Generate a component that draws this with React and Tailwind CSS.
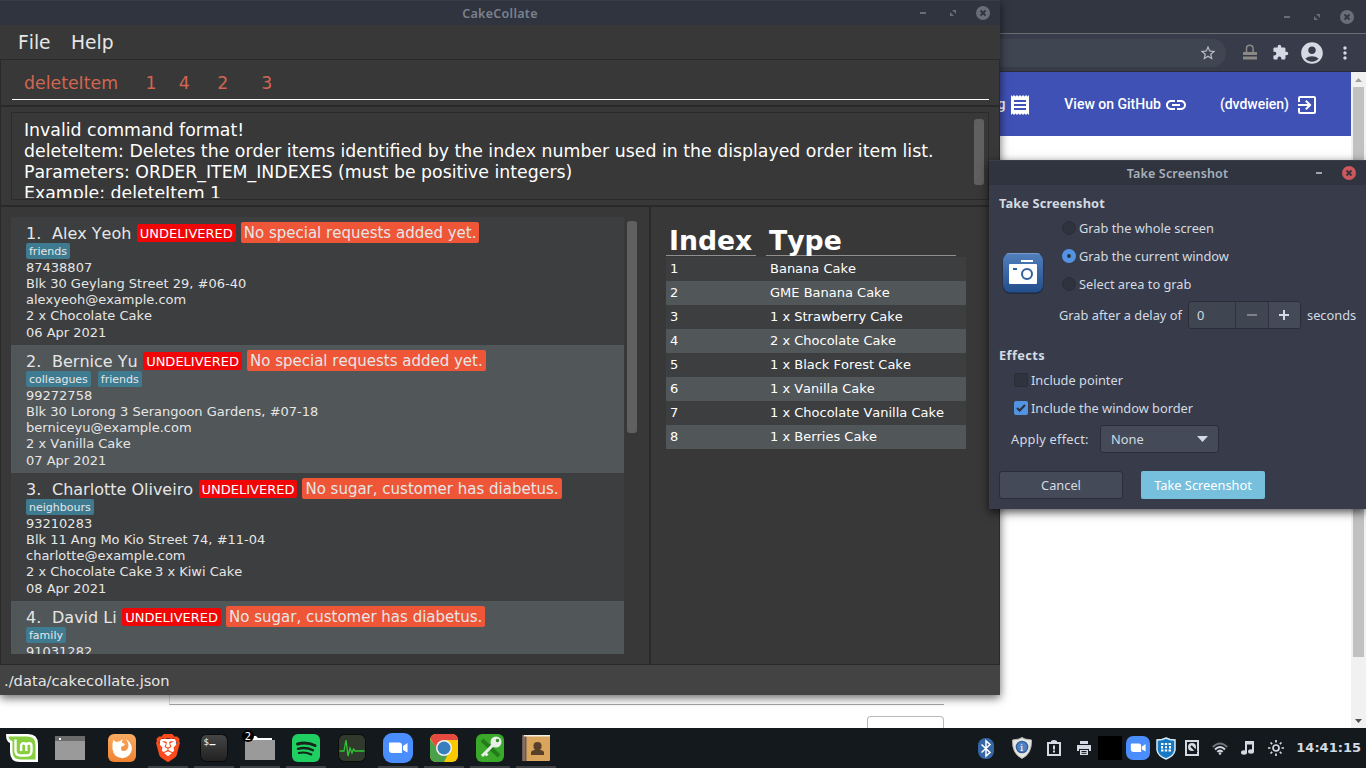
import React from "react";
import { MdReceipt, MdLink, MdExitToApp, MdExtension, MdAccountCircle, MdMoreVert, MdStarBorder } from "react-icons/md";
import { SiBrave } from "react-icons/si";

const orders = [
  { name: "Alex Yeoh", note: "No special requests added yet.", tags: ["friends"], phone: "87438807", address: "Blk 30 Geylang Street 29, #06-40", email: "alexyeoh@example.com", items: ["2 x Chocolate Cake"], date: "06 Apr 2021" },
  { name: "Bernice Yu", note: "No special requests added yet.", tags: ["colleagues", "friends"], phone: "99272758", address: "Blk 30 Lorong 3 Serangoon Gardens, #07-18", email: "berniceyu@example.com", items: ["2 x Vanilla Cake"], date: "07 Apr 2021" },
  { name: "Charlotte Oliveiro", note: "No sugar, customer has diabetus.", tags: ["neighbours"], phone: "93210283", address: "Blk 11 Ang Mo Kio Street 74, #11-04", email: "charlotte@example.com", items: ["2 x Chocolate Cake", "3 x Kiwi Cake"], date: "08 Apr 2021" },
  { name: "David Li", note: "No sugar, customer has diabetus.", tags: ["family"], phone: "91031282", address: "", email: "", items: [], date: "" },
];

const orderItems = ["Banana Cake", "GME Banana Cake", "1 x Strawberry Cake", "2 x Chocolate Cake", "1 x Black Forest Cake", "1 x Vanilla Cake", "1 x Chocolate Vanilla Cake", "1 x Berries Cake"];

function Minimize() {
  return <svg width="6" height="2"><rect width="6" height="2" fill="currentColor" /></svg>;
}

function Maximize() {
  return (
    <svg width="6" height="6" viewBox="0 0 6 6" fill="currentColor">
      <path d="M2 0h4v4zM0 2l4 4H0z" />
    </svg>
  );
}

function Close({ disc, cross }) {
  return (
    <svg width="14" height="14" viewBox="0 0 14 14">
      <circle cx="7" cy="7" r="7" fill={disc} />
      <path d="M4.5 4.5l5 5m0-5l-5 5" stroke={cross} strokeWidth="1.8" />
    </svg>
  );
}

function Browser() {
  return (
    <div className="flex h-[728px] w-full flex-col bg-white">
      <div className="flex h-[33px] shrink-0 items-center justify-end gap-6 bg-[#313641] pr-3 text-[#686d78]">
        <Minimize />
        <Maximize />
        <div className="-ml-1"><Close disc="#686d78" cross="#313641" /></div>
      </div>
      <div className="flex h-[39px] shrink-0 items-center border-b border-t border-b-[#2b2e39] border-t-[#696d75] bg-[#383c4a] pr-[13px]">
        <div className="flex h-7 w-[1226px] items-center justify-end rounded-r-full bg-[#404552] pr-[9px]">
          <MdStarBorder size={18} color="#b8bcc6" />
        </div>
        <div className="flex flex-1 items-center justify-end">
          <svg className="mr-[14px]" width="16" height="17" viewBox="0 0 16 17">
            <path d="M4.5 8V4.5a3.3 3.3 0 0 1 6.600 0V8" fill="none" stroke="#8b8986" strokeWidth="1.5" />
            <rect x="1" y="8" width="14" height="3" fill="#8b8986" />
            <rect x="1" y="12.5" width="14" height="3" fill="#8b8986" />
          </svg>
          <MdExtension size={17} color="#d3dae3" className="mr-[10px]" />
          <MdAccountCircle size={26} color="#d3dae3" className="mr-[10px]" />
          <MdMoreVert size={20} color="#d3dae3" className="-mr-[2px]" />
        </div>
      </div>
      <div className="flex min-h-0 flex-1">
        <div className="flex flex-1 flex-col">
          <div className="flex h-16 items-center justify-end bg-[#3f51b5] pr-8 font-['Roboto',sans-serif] text-[14px] font-medium text-white">
            <span>Catalog</span>
            <MdReceipt size={24} className="ml-[3px] mt-px" />
            <span className="ml-8">View on GitHub</span>
            <MdLink size={24} className="ml-[3px] mt-px" />
            <span className="ml-8">(dvdweien)</span>
            <MdExitToApp size={24} className="ml-[6px] mt-px" />
          </div>
          <div className="flex flex-1 flex-col justify-end pl-[169px]">
            <div className="h-5 w-[775px] border-b border-l border-b-[#a3a3a3] border-l-[#dddddd]" />
            <div className="mt-[11px] flex w-[775px] justify-end">
              <div className="h-3 w-[77px] rounded-t border border-b-0 border-[#b9b9b9]" />
            </div>
          </div>
        </div>
        <div className="flex w-[15px] flex-col items-center bg-[#f1f1f1]">
          <div className="flex h-[15px] items-center"><svg width="7" height="4"><path d="M0 4L3.5 0 7 4z" fill="#a0a0a0" /></svg></div>
          <div className="h-[570px] w-[11px] bg-[#c1c1c1]" />
          <div className="mt-auto flex h-[15px] items-center"><svg width="7" height="4"><path d="M0 0L3.5 4 7 0z" fill="#505050" /></svg></div>
        </div>
      </div>
    </div>
  );
}

function OrderRow({ order, index }) {
  return (
    <div className={`h-32 shrink-0 pl-[15px] pt-[6px] text-[13px] leading-4 text-[#e6e6e6] ${index % 2 ? "bg-[#515658]" : "bg-[#3c3e3f]"}`}>
      <div className="flex h-5 items-start whitespace-pre text-[16px] leading-4">
        <span className="mt-[3px] w-[26px]">{index + 1}.</span>
        <span className="mt-[3px]">{order.name}</span>
        <span className="ml-[5.5px] mt-px h-[18px] rounded-[2px] bg-[#f00606] px-[3px] text-[13px] leading-[20px] text-white">UNDELIVERED</span>
        <span className="-mt-px ml-[5px] h-[21px] rounded-[2px] bg-[#ef5537] px-[3px] text-[15px] leading-[22px]">{order.note}</span>
      </div>
      <div className="flex h-[17px] gap-[7px]">
        {order.tags.map((t) => (
          <span key={t} className="h-4 rounded-[2px] bg-[#3e7b91] px-[3px] text-[11px] leading-[17px]">{t}</span>
        ))}
      </div>
      <div>{order.phone}</div>
      <div>{order.address}</div>
      <div>{order.email}</div>
      <div className="flex h-[17px] gap-[3px]">{order.items.map((i) => <span key={i}>{i}</span>)}</div>
      <div>{order.date}</div>
    </div>
  );
}

function CakeCollate() {
  return (
    <div className="absolute left-0 top-0 flex h-[695px] w-[1000px] flex-col bg-[#383838] font-['DejaVu_Sans',sans-serif] shadow-[0_3px_9px_rgba(0,0,0,0.6)] [font-kerning:none]">
      <div className="grid h-[25px] shrink-0 grid-cols-[1fr_auto_1fr] items-center border-t border-[#383c48] bg-[#2f343f] text-[#7c818c]">
        <span />
        <span className="pt-0.5 font-['Noto_Sans',sans-serif] text-[12.5px] font-semibold tracking-[0.3px]">CakeCollate</span>
        <div className="flex items-center justify-end gap-6 pr-[10px] text-[#686d78]">
          <Minimize />
          <Maximize />
          <div className="-ml-1"><Close disc="#686d78" cross="#2f343f" /></div>
        </div>
      </div>
      <div className="flex h-[34px] shrink-0 items-center gap-[20.5px] pl-[18px] pt-0.5 text-[18.67px] text-[#e6e6e6]">
        <span>File</span>
        <span>Help</span>
      </div>
      <div className="flex h-[606px] shrink-0 flex-col border border-[#292929]">
        <div className="h-[45px] pl-[11px] pr-[10px]">
          <div className="flex h-10 items-center whitespace-pre border-b border-white pl-3 pt-[9px] text-[17.33px] text-[#d06651]">{"deleteItem     1    4     2      3"}</div>
        </div>
        <div className="h-[102px] border-y-2 border-[#292929] px-[10px] py-[5px]">
          <div className="flex h-[88px] justify-between overflow-hidden border border-[#2b2b2b] pl-3 pr-1 pt-[7px]">
            <div className="h-[78px] overflow-hidden whitespace-pre text-[17.33px] leading-[21px] text-white">
              <div>Invalid command format!</div>
              <div>deleteItem: Deletes the order items identified by the index number used in the displayed order item list.</div>
              <div>Parameters: ORDER_ITEM_INDEXES (must be positive integers)</div>
              <div>Example: deleteItem 1</div>
            </div>
            <div className="-mt-px h-[66px] w-[10px] rounded-[3px] bg-[#606060]" />
          </div>
        </div>
        <div className="flex min-h-0 flex-1">
          <div className="flex w-[650px] border-r-2 border-[#2a2a2a] pl-[10px] pt-[10px]">
            <div className="flex h-[437px] w-[613px] flex-col overflow-hidden">
              {orders.map((o, i) => <OrderRow key={o.name} order={o} index={i} />)}
            </div>
            <div className="ml-[3px] mt-1 h-[212px] w-[10px] rounded-[3px] bg-[#606060]" />
          </div>
          <div className="pl-[15px] pt-[17px] text-[13px] text-white">
            <div className="flex h-[33px] gap-[10px] text-[26.67px] font-bold leading-[33px]">
              <div className="h-8 w-[90px] border-b border-[#8f8f8f] pl-[3px]">Index</div>
              <div className="h-8 w-[190px] border-b border-[#8f8f8f] pl-[3px]">Type</div>
            </div>
            {orderItems.map((name, i) => (
              <div key={name} className={`flex h-6 w-[300px] items-center pl-1 ${i % 2 ? "bg-[#515658]" : "bg-[#3c3e3f]"}`}>
                <span className="w-[100px]">{i + 1}</span>
                <span>{name}</span>
              </div>
            ))}
          </div>
        </div>
      </div>
      <div className="flex flex-1 items-center bg-[#434343] pl-1 pt-0.5 text-[14.67px] text-[#e6e6e6]">./data/cakecollate.json</div>
    </div>
  );
}

function Radio({ on, children }) {
  return (
    <div className="flex h-7 items-center gap-[3px]">
      <span className={`flex size-[14px] items-center justify-center rounded-full ${on ? "bg-[#5294e2]" : "border border-[#2b2e39] bg-[#2f333d]"}`}>
        {on && <span className="size-1 rounded-full bg-[#2d3442]" />}
      </span>
      {children}
    </div>
  );
}

function ScreenshotDialog() {
  return (
    <div className="absolute left-[989px] top-[160px] flex h-[349px] w-[377px] flex-col bg-[#383c4a] font-['Noto_Sans',sans-serif] text-[12.8px] leading-4 text-[#d3dae3] shadow-[0_3px_9px_rgba(0,0,0,0.7)]">
      <div className="grid h-[25px] shrink-0 grid-cols-[1fr_auto_1fr] items-center border-t border-[#3b3f4b] bg-[#2f343f]">
        <span />
        <span className="pt-px text-[12.5px] font-semibold tracking-[0.15px] text-[#a9b0bb]">Take Screenshot</span>
        <div className="flex items-center justify-end gap-5 pr-[10px] text-[#a0a5af]">
          <Minimize />
          <Close disc="#cc575d" cross="#2f343f" />
        </div>
      </div>
      <div className="flex flex-1 flex-col pl-[10px] pt-[10px]">
        <div className="h-[19px] text-[12.8px] font-bold tracking-[0.13px]">Take Screenshot</div>
        <div className="flex">
          <div className="w-[63px] pl-[3px] pt-[38px]">
            <svg width="42" height="42" viewBox="0 0 42 42">
              <defs><linearGradient id="cam" x1="0" y1="0" x2="0" y2="1"><stop offset="0" stopColor="#5180bd" /><stop offset="1" stopColor="#234d8b" /></linearGradient></defs>
              <rect x="0.5" y="1" width="41" height="41" rx="8" fill="#202b3c" />
              <rect x="1" y="1" width="40" height="39.5" rx="7.5" fill="url(#cam)" />
              <path d="M4 2.2Q6 1.500 8 1.500H34Q36 1.500 38 2.2" fill="none" stroke="#7fa3d2" strokeWidth="0.8" />
              <rect x="19" y="8" width="12" height="2" fill="#fff" />
              <rect x="7" y="12" width="28" height="20" rx="1" fill="#fff" />
              <rect x="11" y="16" width="4" height="2" fill="#315f9e" />
              <circle cx="25" cy="22" r="5" fill="none" stroke="#315f9e" strokeWidth="2" />
            </svg>
          </div>
          <div>
            <Radio>Grab the whole screen</Radio>
            <Radio on>Grab the current window</Radio>
            <Radio>Select area to grab</Radio>
          </div>
        </div>
        <div className="mt-[3px] flex h-7 items-center">
          <span className="ml-[60px] w-[129px] whitespace-nowrap">Grab after a delay of</span>
          <div className="flex h-7 w-[113px] overflow-hidden rounded-[3px] border border-[#2b2e39] bg-[#404552]">
            <span className="flex w-[47px] items-center border-r border-[#2f333f] pl-2">0</span>
            <span className="flex w-[33px] items-center justify-center border-r border-[#2f333f]"><svg width="10" height="2"><rect width="10" height="2" fill="#7c818c" /></svg></span>
            <span className="flex flex-1 items-center justify-center bg-[#444a58] pr-px"><svg width="10" height="10"><path d="M0 4h10v2H0zM4 0h2v10H4z" fill="#d3dae3" /></svg></span>
          </div>
          <span className="ml-[6px]">seconds</span>
        </div>
        <div className="mt-[18px] h-[19px] text-[12.8px] font-bold tracking-[0.4px]">Effects</div>
        <div className="flex h-7 items-center gap-[3px] pl-[15px]">
          <span className="size-[14px] rounded-[2px] border border-[#2b2e39] bg-[#2f333d]" />
          <span>Include pointer</span>
        </div>
        <div className="flex h-7 items-center gap-[3px] pl-[15px]">
          <span className="flex size-[14px] items-center justify-center rounded-[2px] bg-[#5294e2]">
            <svg width="10" height="8" viewBox="0 0 10 8"><path d="M1 4l2.700 2.500L9 1" fill="none" stroke="#2b303d" strokeWidth="2" /></svg>
          </span>
          <span>Include the window border</span>
        </div>
        <div className="mt-[3px] flex h-7 items-center pl-3">
          <span className="w-[89px] whitespace-nowrap tracking-[0.25px]">Apply effect:</span>
          <div className="flex h-7 w-[119px] items-center justify-between rounded-[3px] border border-[#2b2e39] bg-[#444a58] pl-[10px] pr-[10px]">
            <span>None</span>
            <svg width="11" height="6"><path d="M0 0h11L5.500 6z" fill="#d3dae3" /></svg>
          </div>
        </div>
        <div className="mt-[18px] flex gap-[18px]">
          <div className="flex h-7 w-[124px] items-center justify-center rounded-[3px] border border-[#2b2e39] bg-[#444a58]">Cancel</div>
          <div className="flex h-7 w-[124px] items-center justify-center rounded-[2px] bg-[#76c0de] text-white">Take Screenshot</div>
        </div>
      </div>
    </div>
  );
}

const Cam = ({ size }) => (
  <svg width={size} height={size} viewBox="0 0 30 30">
    <rect width="30" height="30" rx="9" fill="#4a8dfc" />
    <path d="M6 10.500Q6 9.500 7 9.500h9q3 0 3 3v7.500H9q-3 0-3-3zM20 13l4.500-3v9.500L20 17z" fill="#fff" />
  </svg>
);

const MintIcon = () => (
  <svg width="32" height="28" viewBox="0 0 32 28">
    <path d="M0 0h22q10 0 10 10v18H14Q4 28 4 18V9Q0 8 0 0z" fill="#fff" />
    <path d="M2.500 2.500H21q8.500 0 8.500 8v15H15q-8.500 0-8.500-8V7Q3 6.500 2.500 2.500z" fill="#87cf3e" />
    <path d="M9.500 5.500v11q0 5 5 5h6.500q4.500 0 4.500-4.500v-5q0-2.800-2.600-2.800T20.300 12v5M20.300 12q0-2.800-2.600-2.800T15.100 12v5" fill="none" stroke="#fff" strokeWidth="2.400" />
  </svg>
);
const FolderWindow = () => (
  <svg width="30" height="24"><rect width="30" height="24" fill="#9a9a9a" /><rect width="30" height="5" fill="#6b6b6b" /><rect x="4" y="2" width="2" height="2" fill="#fff" /></svg>
);
const FirefoxIcon = () => (
  <svg width="28" height="28" viewBox="0 0 28 28">
    <defs><linearGradient id="ff" x1="0" y1="0" x2="0" y2="1"><stop offset="0" stopColor="#f8ab62" /><stop offset="1" stopColor="#f08230" /></linearGradient></defs>
    <rect width="28" height="28" rx="6" fill="url(#ff)" />
    <path d="M5.500 5.500Q6.500 7.500 8.500 8q2-1 3.500-.8Q13 5.500 15 5.500q-1.500 1.500-1 3.200l3 1.300q-.5 2-3.500 2.500Q12 16 15 17q3 .5 4.500-2Q22 11 18 5q5.500 3.500 6 9.500-1 9-9.500 9.700Q5.500 23.500 4.500 15 4 9 5.500 5.500z" fill="#fff" />
  </svg>
);
const BraveIcon = () => (
  <div className="relative flex h-8 w-7 items-center justify-center">
    <svg className="absolute left-1 top-1" width="20" height="25"><path d="M2 3h16l1 11-9 9-9-9z" fill="#fff" /></svg>
    <SiBrave className="relative" size={32} color="#fb4a1c" />
  </div>
);
const TerminalIcon = () => (
  <svg width="28" height="28">
    <defs><linearGradient id="term" x1="0" y1="0" x2="0" y2="1"><stop offset="0" stopColor="#464646" /><stop offset="1" stopColor="#212121" /></linearGradient></defs>
    <rect x="0.500" y="0.500" width="27" height="27" rx="6" fill="url(#term)" stroke="#0b0b0b" />
    <text x="3.500" y="10.500" fill="#fff" fontSize="9" fontFamily="DejaVu Sans Mono, monospace">$</text><rect x="9.500" y="10" width="6" height="1.200" fill="#fff" />
  </svg>
);
const FolderIcon = () => (
  <div className="relative">
    <svg className="block" width="30" height="24"><path d="M6 0h5l2 2h14v4H6z" fill="#fff" /><rect y="4" width="30" height="20" fill="#9a9a9a" /></svg>
    <span className="absolute -left-[3px] -top-[6px] flex size-3 items-center justify-center rounded-full bg-black font-['DejaVu_Sans',sans-serif] text-[10px] text-white">2</span>
  </div>
);
const SpotifyIcon = () => (
  <svg width="28" height="28">
    <rect width="28" height="28" rx="6" fill="#20cf62" />
    <g fill="none" stroke="#15251b" strokeLinecap="round"><path d="M5.500 10q9-2.500 17.500 1.500" strokeWidth="3" /><path d="M6 14.800q8-2 15 1.500" strokeWidth="2.400" /><path d="M6.800 19q6.500-1.500 12.500 1.500" strokeWidth="2" /></g>
  </svg>
);
const MonitorIcon = () => (
  <svg width="28" height="28"><rect x="0.500" y="0.500" width="27" height="27" rx="6" fill="#2f3a2c" stroke="#0b0d0b" /><path d="M1.500 17H6l2-11 2 16 2-8 2 5 1.500-4 1.500 2h9.500" fill="none" stroke="#2fc533" strokeWidth="1.300" /></svg>
);
const ChromeIcon = () => (
  <svg width="28" height="28" viewBox="0 0 28 28">
    <defs><clipPath id="cr"><rect width="28" height="28" rx="6" /></clipPath></defs>
    <g clipPath="url(#cr)"><rect width="28" height="28" fill="#fbc900" /><path d="M0 5l9 12 9 3-4 8H0z" fill="#4ba04c" /><path d="M0 0h28v6H14L7 15 0 4z" fill="#e6493f" /></g>
    <circle cx="14" cy="14" r="8" fill="#f3f3f3" /><circle cx="14" cy="14" r="6.500" fill="#397fbd" />
  </svg>
);
const KeyIcon = () => (
  <svg width="28" height="28">
    <rect width="28" height="28" rx="6" fill="#3aa829" /><path d="M6 6l17 16" stroke="#237c19" strokeWidth="4" />
    <path d="M6 22L18 10M8 18l3.500 3.500" stroke="#e9eee8" strokeWidth="3" /><circle cx="20" cy="8" r="5.500" fill="#e9eee8" /><circle cx="21.500" cy="6.500" r="1.700" fill="#338d26" />
  </svg>
);
const ContactsIcon = () => (
  <svg width="28" height="26"><rect width="28" height="26" rx="1" fill="#d9a45b" /><rect width="4.500" height="26" fill="#6f5b50" /><rect x="1.500" width="1" height="26" fill="#978273" /><rect x="2" width="26" height="1.500" fill="#f4eee4" /><path d="M9 20v-2.500q0-2 4-2.500-2-2-1.500-5Q12 7 15.500 7T19.500 10q.5 3-1.500 5 4 .5 4 2.500V20z" fill="#573f29" /></svg>
);

const launchers = [
  { el: <FirefoxIcon />, open: false }, { el: <BraveIcon />, open: true }, { el: <TerminalIcon />, open: true }, { el: <FolderIcon />, open: true },
  { el: <SpotifyIcon />, open: true }, { el: <MonitorIcon />, open: false }, { el: <Cam size={30} />, open: true }, { el: <ChromeIcon />, open: true },
  { el: <KeyIcon />, open: true }, { el: <ContactsIcon />, open: true },
];

function Tray() {
  return (
    <div className="flex h-10 items-center">
      <svg width="16" height="21" viewBox="0 0 16 21"><rect width="16" height="21" rx="7.500" fill="#3465a4" /><path d="M3.500 6.500l8.500 8-4 3.500V3l4 3.500-8.500 8" fill="none" stroke="#fff" strokeWidth="1.500" /></svg>
      <svg className="ml-[18px]" width="20" height="22" viewBox="0 0 20 22"><path d="M10 .5l3 1.500 6.500 1Q20 17 10 21.500 0 17 .5 3L7 2z" fill="#e6e6e2" stroke="#b5b5b0" /><circle cx="10" cy="10" r="6.300" fill="#2f5f9f" /><circle cx="10" cy="10" r="5" fill="#5283c0" /><text x="8" y="13.500" fontSize="10" fill="#fff" fontFamily="DejaVu Serif, serif">i</text></svg>
      <svg className="ml-[15px]" width="14" height="16" fill="#d3dae3"><path d="M0 2h4V1q3-2 6 0v1h4v14H0zM2 4v10h10V4z" fillRule="evenodd" /><rect x="6" y="5.500" width="2" height="4" /><rect x="6" y="10.500" width="2" height="2" /></svg>
      <svg className="ml-4" width="14" height="14" fill="#d3dae3"><path d="M3 0h8v3H3zM0 4h14v6h-2V8H2v2H0zM3 9h8v5H3z" /><path d="M4.500 10.500h5m-5 1.800h5" stroke="#15191d" /></svg>
      <div className="ml-[7px] size-6 bg-black" />
      <div className="ml-1"><Cam size={24} /></div>
      <svg className="ml-1.5" width="20" height="23" viewBox="0 0 20 23"><path d="M10 1l4 1.500 5 .5v10q-1 6-9 9-8-3-9-9V3l5-.5z" fill="#1779c4" stroke="#d9edfa" strokeWidth="1.500" /><path d="M5 6h2.500v2H5zM8.800 6h2.400v2H8.800zM12.500 6H15v2h-2.500zM5 9h2v2.500H5zM13 9h2v2.500h-2zM5 12.500h2.500v2H5zM8.800 12.500h2.400v2H8.800zM12.500 12.500H15v2h-2.500zM9 9.200h2v2H9z" fill="#fff" /></svg>
      <svg className="ml-[9px]" width="14" height="16"><rect x="1" y="1" width="12" height="14" fill="none" stroke="#d3dae3" strokeWidth="2" /><circle cx="7" cy="7" r="4" fill="#d3dae3" /><path d="M6 6l6 6" stroke="#15191d" strokeWidth="2" /></svg>
      <svg className="ml-[13px]" width="16" height="13" viewBox="0 0 16 13" fill="none" strokeWidth="2"><path d="M.8 5q7.200-7 14.400 0" stroke="#6e7479" /><path d="M3 7.500q5-5 10 0M5.300 9.900q2.700-2.600 5.400 0" stroke="#d3dae3" /><circle cx="8" cy="11.500" r="1.300" fill="#d3dae3" /></svg>
      <svg className="ml-[13px]" width="13" height="14" fill="#d3dae3"><path d="M4 0h9v11H11V3.500H6V12H4z" /><ellipse cx="3" cy="11.500" rx="3" ry="2.200" /><ellipse cx="10" cy="10.500" rx="3" ry="2.200" /></svg>
      <svg className="ml-[14px]" width="16" height="16" viewBox="0 0 16 16" stroke="#d3dae3" fill="none" strokeWidth="1.700"><circle cx="8" cy="8" r="3" /><path d="M8 0v2.500m0 11V16M0 8h2.500m11 0H16M2.500 2.500l1.700 1.700m7.600 7.600l1.700 1.700m0-11l-1.700 1.700m-7.600 7.600l-1.700 1.700" /></svg>
      <span className="ml-3 mr-[5px] font-['DejaVu_Sans',sans-serif] text-[13px] font-bold text-[#d3dae3]">14:41:15</span>
    </div>
  );
}

function Panel() {
  return (
    <div className="flex h-10 items-start justify-between bg-[#14191d]">
      <div className="flex h-10 items-center pl-1.5">
        <MintIcon />
        <div className="ml-[17px] mr-[14px]"><FolderWindow /></div>
        {launchers.map((l, i) => (
          <div key={i} className={`mx-[3px] flex h-10 w-10 items-center justify-center border-t-2 border-b-2 border-t-transparent ${l.open ? "border-b-[#3d4145]" : "border-b-transparent"}`}>{l.el}</div>
        ))}
      </div>
      <Tray />
    </div>
  );
}

export default function App() {
  return (
    <div className="relative h-[768px] w-[1366px] overflow-hidden">
      <Browser />
      <CakeCollate />
      <ScreenshotDialog />
      <Panel />
    </div>
  );
}
